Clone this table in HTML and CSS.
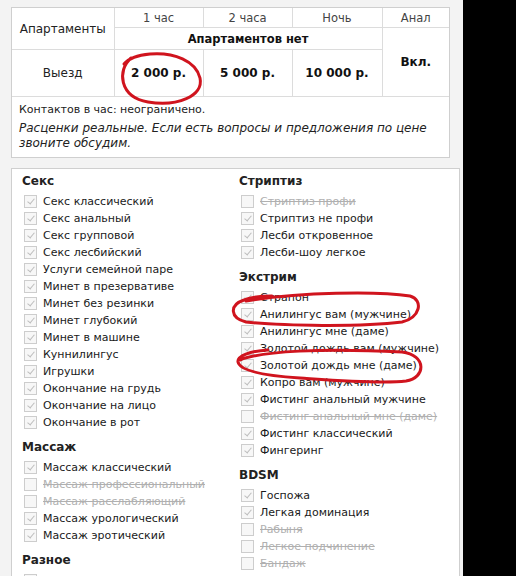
FILE: index.html
```html
<!DOCTYPE html>
<html lang="ru">
<head>
<meta charset="utf-8">
<link rel="stylesheet" href="styles.css">
</head>
<body>
<div class="page">
  <div class="panel prices">
    <table class="ptable">
      <colgroup>
        <col class="c1"><col class="c2"><col class="c3"><col class="c4"><col class="c5">
      </colgroup>
      <tr class="r1">
        <td rowspan="2" class="label">Апартаменты</td>
        <td class="hd">1 час</td>
        <td class="hd">2 часа</td>
        <td class="hd">Ночь</td>
        <td class="hd">Анал</td>
      </tr>
      <tr class="r2">
        <td colspan="3" class="bold">Апартаментов нет</td>
        <td rowspan="2" class="bold big">Вкл.</td>
      </tr>
      <tr class="r3">
        <td class="label">Выезд</td>
        <td class="bold big">2 000 р.</td>
        <td class="bold big">5 000 р.</td>
        <td class="bold big">10 000 р.</td>
      </tr>
    </table>
    <div class="notes">
      <div class="contacts">Контактов в час: неограничено.</div>
      <div class="remark">Расценки реальные. Если есть вопросы и предложения по цене звоните обсудим.</div>
    </div>
  </div>

  <div class="panel services">
    <div class="col">
      <div class="sec">
        <div class="sh">Секс</div>
        <div class="it"><span class="cb on"></span>Секс классический</div>
        <div class="it"><span class="cb on"></span>Секс анальный</div>
        <div class="it"><span class="cb on"></span>Секс групповой</div>
        <div class="it"><span class="cb on"></span>Секс лесбийский</div>
        <div class="it"><span class="cb on"></span>Услуги семейной паре</div>
        <div class="it"><span class="cb on"></span>Минет в презервативе</div>
        <div class="it"><span class="cb on"></span>Минет без резинки</div>
        <div class="it"><span class="cb on"></span>Минет глубокий</div>
        <div class="it"><span class="cb on"></span>Минет в машине</div>
        <div class="it"><span class="cb on"></span>Куннилингус</div>
        <div class="it"><span class="cb on"></span>Игрушки</div>
        <div class="it"><span class="cb on"></span>Окончание на грудь</div>
        <div class="it"><span class="cb on"></span>Окончание на лицо</div>
        <div class="it"><span class="cb on"></span>Окончание в рот</div>
      </div>
      <div class="sec">
        <div class="sh">Массаж</div>
        <div class="it"><span class="cb on"></span>Массаж классический</div>
        <div class="it off"><span class="cb"></span><s>Массаж профессиональный</s></div>
        <div class="it off"><span class="cb"></span><s>Массаж расслабляющий</s></div>
        <div class="it"><span class="cb on"></span>Массаж урологический</div>
        <div class="it"><span class="cb on"></span>Массаж эротический</div>
      </div>
      <div class="sec">
        <div class="sh">Разное</div>
        <div class="it"><span class="cb on"></span>Ролевые игры</div>
      </div>
    </div>
    <div class="col">
      <div class="sec">
        <div class="sh">Стриптиз</div>
        <div class="it off"><span class="cb"></span><s>Стриптиз профи</s></div>
        <div class="it"><span class="cb on"></span>Стриптиз не профи</div>
        <div class="it"><span class="cb on"></span>Лесби откровенное</div>
        <div class="it"><span class="cb on"></span>Лесби-шоу легкое</div>
      </div>
      <div class="sec">
        <div class="sh">Экстрим</div>
        <div class="it"><span class="cb on"></span>Страпон</div>
        <div class="it"><span class="cb on"></span>Анилингус вам (мужчине)</div>
        <div class="it"><span class="cb on"></span>Анилингус мне (даме)</div>
        <div class="it"><span class="cb on"></span>Золотой дождь вам (мужчине)</div>
        <div class="it"><span class="cb on"></span>Золотой дождь мне (даме)</div>
        <div class="it"><span class="cb on"></span>Копро вам (мужчине)</div>
        <div class="it"><span class="cb on"></span>Фистинг анальный мужчине</div>
        <div class="it off"><span class="cb"></span><s>Фистинг анальный мне (даме)</s></div>
        <div class="it"><span class="cb on"></span>Фистинг классический</div>
        <div class="it"><span class="cb on"></span>Фингеринг</div>
      </div>
      <div class="sec">
        <div class="sh">BDSM</div>
        <div class="it"><span class="cb on"></span>Госпожа</div>
        <div class="it"><span class="cb on"></span>Легкая доминация</div>
        <div class="it off"><span class="cb"></span><s>Рабыня</s></div>
        <div class="it off"><span class="cb"></span><s>Легкое подчинение</s></div>
        <div class="it off"><span class="cb"></span><s>Бандаж</s></div>
      </div>
    </div>
  </div>
</div>

<svg class="marks" width="516" height="576" viewBox="0 0 516 576">
  <path d="M131,58 C117,70 119,97 148,102 C177,107 204,96 200,78 C196,61 174,52 150,54 C139,55 129,58 124,64"/>
  <path d="M246,301 C300,292 378,291 410,296 C424,300 420,318 402,322 C362,327 282,326 246,322 C230,318 229,305 244,300 C252,297 262,296 272,296"/>
  <path d="M240,360 C262,351 322,348 402,352 C427,355 426,378 406,381 C380,384 330,380 300,378 C270,376 240,372 238,362 C237,356 250,351 268,350"/>
</svg>
</body>
</html>
```
FILE: styles.css
```css
html, body {
  margin: 0;
  padding: 0;
  background: #000;
}
body {
  font-family: "DejaVu Sans", Verdana, sans-serif;
  font-size: 11px;
  color: #111;
  overflow: hidden;
  height: 576px;
  position: relative;
}
.page {
  width: 463px;
  height: 576px;
  background: #f3f3f3;
  padding-top: 7px;
  box-sizing: border-box;
  overflow: hidden;
}
.panel {
  margin-left: 11px;
  width: 437px;
  background: #fff;
  border: 1px solid #cfcfcf;
}
.ptable {
  width: 100%;
  border-collapse: collapse;
  table-layout: fixed;
}
.ptable td {
  border: 1px solid #dcdcdc;
  text-align: center;
  padding: 0;
}
.ptable tr:first-child td { border-top: none; }
.ptable td:first-child { border-left: none; }
.ptable td:last-child { border-right: none; }
.c1 { width: 102px; }
.c2 { width: 89px; }
.c3 { width: 89px; }
.c4 { width: 90px; }
.c5 { width: 67px; }
.r1 td { height: 19px; }
.r2 td { height: 21px; }
.r3 td { height: 46px; }
.hd { color: #444; font-size: 11.5px; }
.label { font-size: 12px; color: #222; }
.bold { font-weight: bold; font-size: 11.5px; }
.big { font-size: 12px; }
.notes {
  padding: 5px 8px 6px 7px;
}
.contacts {
  font-size: 11px;
  line-height: 15px;
  color: #222;
}
.remark {
  font-style: italic;
  font-size: 12px;
  line-height: 15px;
  margin-top: 4px;
  color: #222;
}
.services {
  margin-top: 10px;
  height: 500px;
  display: grid;
  grid-template-columns: 217px 209px;
  padding: 4px 0 0 10px;
  box-sizing: content-box;
}
.sec + .sec { margin-top: 8px; }
.sh {
  font-weight: bold;
  font-size: 12px;
  line-height: 17px;
  margin-bottom: 3px;
  color: #222;
}
.it {
  display: flex;
  align-items: center;
  height: 17px;
  font-size: 11px;
  color: #1a1a1a;
  white-space: nowrap;
}
.it.off { color: #b0b0b0; }
.cb {
  width: 11px;
  height: 11px;
  border: 1px solid #cdcdcd;
  background: #f7f7f7;
  margin-left: 2px;
  margin-right: 6px;
  flex: none;
  position: relative;
}
.cb.on::after {
  content: "";
  position: absolute;
  left: 4px;
  top: 1px;
  width: 3px;
  height: 6px;
  border-right: 1.5px solid #bdbdbd;
  border-bottom: 1.5px solid #bdbdbd;
  transform: rotate(40deg);
}
.marks {
  position: absolute;
  left: 0;
  top: 0;
  pointer-events: none;
}
.marks path {
  fill: none;
  stroke: #d0141e;
  stroke-width: 3;
  stroke-linecap: round;
}
```
